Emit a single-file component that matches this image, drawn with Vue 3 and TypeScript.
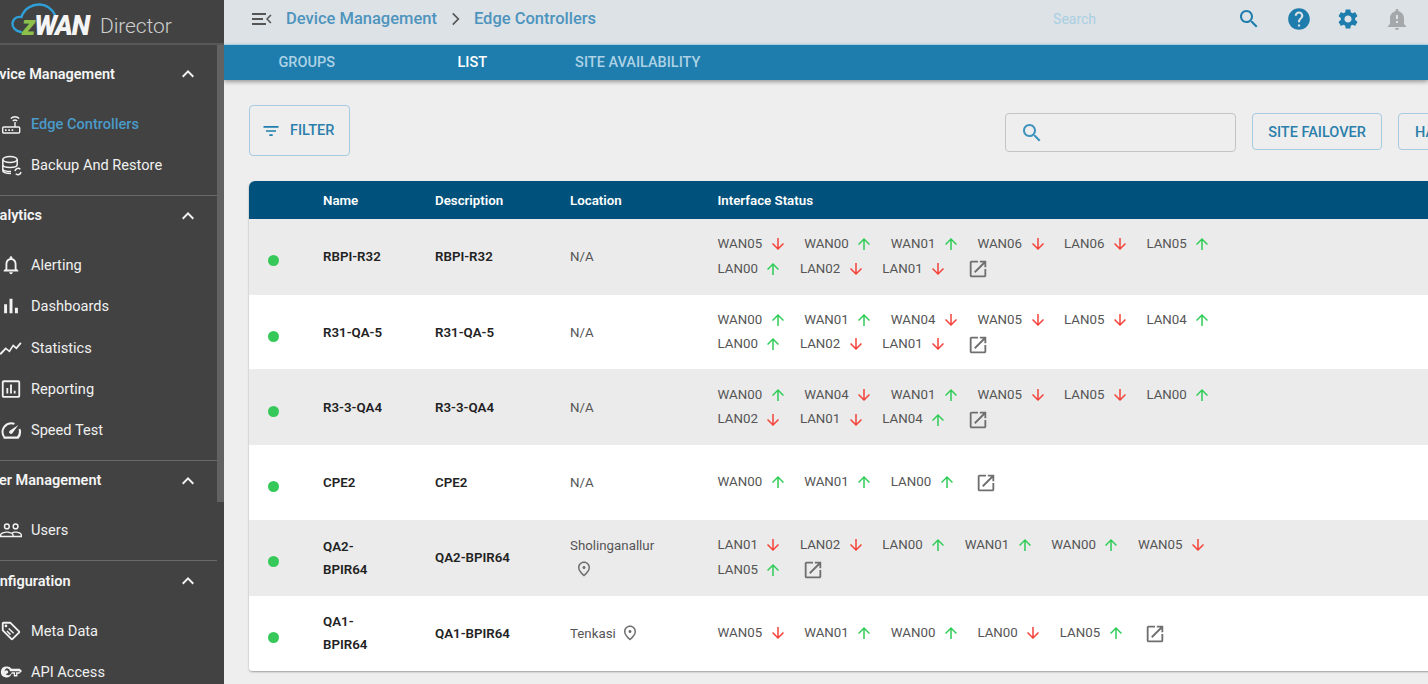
<script setup lang="ts">
const P: Record<string, string> = {
  chevron: 'M12 8l-6 6 1.41 1.41L12 10.83l4.59 4.58L18 14z',
  search: 'M15.5 14h-.79l-.28-.27C15.41 12.59 16 11.11 16 9.5 16 5.91 13.09 3 9.5 3S3 5.91 3 9.5 5.91 16 9.5 16c1.61 0 3.09-.59 4.23-1.57l.27.28v.79l5 4.99L20.49 19l-4.99-5zm-6 0C7.01 14 5 11.99 5 9.5S7.01 5 9.5 5 14 7.01 14 9.5 11.99 14 9.5 14z',
  help: 'M12 2C6.48 2 2 6.48 2 12s4.48 10 10 10 10-4.48 10-10S17.52 2 12 2zm1 17h-2v-2h2v2zm2.07-7.75l-.9.92C13.45 12.9 13 13.5 13 15h-2v-.5c0-1.1.45-2.1 1.17-2.83l1.24-1.26c.37-.36.59-.86.59-1.41 0-1.1-.9-2-2-2s-2 .9-2 2H8c0-2.21 1.79-4 4-4s4 1.79 4 4c0 .88-.36 1.68-.93 2.25z',
  gear: 'M19.14,12.94c0.04-0.3,0.06-0.61,0.06-0.94c0-0.32-0.02-0.64-0.07-0.94l2.03-1.58c0.18-0.14,0.23-0.41,0.12-0.61 l-1.92-3.32c-0.12-0.22-0.37-0.29-0.59-0.22l-2.39,0.96c-0.5-0.38-1.03-0.7-1.62-0.94L14.4,2.81c-0.04-0.24-0.24-0.41-0.48-0.41 h-3.84c-0.24,0-0.43,0.17-0.47,0.41L9.25,5.35C8.66,5.59,8.12,5.92,7.63,6.29L5.24,5.33c-0.22-0.08-0.47,0-0.59,0.22L2.74,8.87 C2.62,9.08,2.66,9.34,2.86,9.48l2.03,1.58C4.84,11.36,4.8,11.69,4.8,12s0.02,0.64,0.07,0.94l-2.03,1.58 c-0.18,0.14-0.23,0.41-0.12,0.61l1.92,3.32c0.12,0.22,0.37,0.29,0.59,0.22l2.39-0.96c0.5,0.38,1.03,0.7,1.62,0.94l0.36,2.54 c0.05,0.24,0.24,0.41,0.48,0.41h3.84c0.24,0,0.44-0.17,0.47-0.41l0.36-2.54c0.59-0.24,1.13-0.56,1.62-0.94l2.39,0.96 c0.22,0.08,0.47,0,0.59-0.22l1.92-3.32c0.12-0.22,0.07-0.47-0.12-0.61L19.14,12.94z M12,15.6c-1.98,0-3.6-1.62-3.6-3.6 s1.62-3.6,3.6-3.6s3.6,1.62,3.6,3.6S13.98,15.6,12,15.6z',
  bell: 'M12 23c1.1 0 1.99-.89 1.99-1.99h-3.98c0 1.1.89 1.99 1.99 1.99zm7-6v-6c0-3.35-2.36-6.15-5.5-6.83V3.5c0-.83-.67-1.5-1.5-1.5s-1.5.67-1.5 1.5v.67C7.36 4.85 5 7.65 5 11v6l-2 2v1h18v-1l-2-2zm-6-1h-2v-2h2v2zm0-4h-2V8h2v4z',
  open: 'M19 19H5V5h7V3H5c-1.11 0-2 .9-2 2v14c0 1.1.89 2 2 2h14c1.1 0 2-.9 2-2v-7h-2v7zM14 3v2h3.59l-9.83 9.83 1.41 1.41L19 6.41V10h2V3h-7z',
  up: 'M4 12l1.41 1.41L11 7.83V20h2V7.83l5.58 5.59L20 12l-8-8-8 8z',
  down: 'M20 12l-1.41-1.41L13 16.17V4h-2v12.17l-5.58-5.59L4 12l8 8 8-8z',
  filter: 'M10 18h4v-2h-4v2zM3 6v2h18V6H3zm3 7h12v-2H6v2z',
  pin: 'M12 12c-1.1 0-2-.9-2-2s.9-2 2-2 2 .9 2 2-.9 2-2 2zm6-1.8C18 6.57 15.35 4 12 4s-6 2.57-6 6.2c0 2.34 1.95 5.44 6 9.14 4.05-3.7 6-6.8 6-9.14zM12 2c4.2 0 8 3.22 8 8.2 0 3.32-2.67 7.25-8 11.8-5.33-4.55-8-8.48-8-11.8C4 5.22 7.8 2 12 2z',
  alert: 'M12 22c1.1 0 2-.9 2-2h-4c0 1.1.9 2 2 2zm6-6v-5c0-3.07-1.63-5.64-4.5-6.32V4c0-.83-.67-1.5-1.5-1.5s-1.5.67-1.5 1.5v.68C7.64 5.36 6 7.92 6 11v5l-2 2v1h16v-1l-2-2zm-2 1H8v-6c0-2.48 1.51-4.5 4-4.5s4 2.02 4 4.5v6z',
  bars: 'M4.5 10h3.2v10H4.5zM10.4 4h3.2v16h-3.2zm5.9 10h3.2v6h-3.2z',
  stats: 'M1 19.500l5.500-6 4 3.500 4-6.500 3.500 3L23.500 7 22 5.800l-4.300 5.200-3.500-3-4.200 6.500-3.800-3.300L-.5 18z',
  report: 'M20 2.5H4C3 2.5 2 3.5 2 4.5v15c0 1 1 2 2 2h16c1 0 2-1 2-2v-15c0-1-1-2-2-2zm0 17H4v-15h16v15zM7 11h2v6H7zm4-4h2v10h-2zm4 7h2v3h-2z',
  speed: 'M3.9 20.5A10.6 10.6 0 0 1 12 3.5c1.5 0 3 .3 4.3.9l-1.1 1.8A8.6 8.6 0 0 0 5.3 19h13.4a8.6 8.6 0 0 0 1.6-7.6l1.8-1a10.6 10.6 0 0 1-1.9 11.1H3.9zM10.6 15.6a2 2 0 0 1 0-2.9L20 6.5l-6.5 9.1a2 2 0 0 1-2.9 0z',
  users: 'M7.5 11.5a3.4 3.4 0 1 0 0-6.8 3.4 3.4 0 0 0 0 6.8zm0-1.6a1.8 1.8 0 1 1 0-3.6 1.8 1.8 0 0 1 0 3.6zM17 11.5a3.4 3.4 0 1 0 0-6.8 3.4 3.4 0 0 0 0 6.8zm0-1.6a1.8 1.8 0 1 1 0-3.6 1.8 1.8 0 0 1 0 3.6zM7.5 13.5c-2.8 0-7.5 1.2-7.5 3.7V20h24v-2.8c0-2.5-4.300-3.700-7-3.700-2 0-3.600.5-4.700 1.200-1.200-.7-2.900-1.200-4.800-1.200zM1.600 18.400v-1.200c0-.9 3.400-2.100 5.900-2.100s5.900 1.200 5.900 2.100v1.200H1.600zm13.400 0v-1.200c0-.7-.3-1.200-.9-1.700.8-.3 1.900-.5 2.900-.5 2.300 0 5.400 1.200 5.400 2.200v1.200H15z',
  tag: 'M21.400 11.600l-9-9C12 2.200 11.500 2 11 2H4C2.900 2 2 2.900 2 4v7c0 .6.200 1.100.6 1.400l9 9c.4.4.9.6 1.400.6s1.100-.2 1.400-.6l7-7c.4-.4.6-.9.6-1.400s-.2-1.100-.6-1.400zM13 20l-9-9V4h7l9 9-7 7zM6.500 5A1.500 1.500 0 1 0 6.500 8 1.500 1.500 0 0 0 6.500 5zM10 8.600l5.400 5.400-1.100 1.100-5.400-5.400zM8.100 11.500l3.900 3.900-1.100 1.100-3.900-3.900z',
  key: 'M7 6a6 6 0 1 0 5.600 8H15v3h4v-3h2l3-3-2.500-2.500H12.600A6 6 0 0 0 7 6zm0 2a4 4 0 0 1 3.900 3.100H21l.7.9-.7.400h-3.500v3h-1v-3h-3.600A4 4 0 1 1 7 8zm0 2a2 2 0 1 0 0 4 2 2 0 0 0 0-4z',
}

interface NavItem { label: string; icon: string; active?: boolean; custom?: string }
const sections: { title: string; items: NavItem[] }[] = [
  { title: 'Device Management', items: [
    { label: 'Edge Controllers', icon: '', custom: 'router', active: true },
    { label: 'Backup And Restore', icon: '', custom: 'db' },
  ] },
  { title: 'Analytics', items: [
    { label: 'Alerting', icon: P.alert },
    { label: 'Dashboards', icon: P.bars },
    { label: 'Statistics', icon: P.stats },
    { label: 'Reporting', icon: P.report },
    { label: 'Speed Test', icon: P.speed },
  ] },
  { title: 'User Management', items: [{ label: 'Users', icon: P.users }] },
  { title: 'Configuration', items: [
    { label: 'Meta Data', icon: P.tag },
    { label: 'API Access', icon: P.key },
  ] },
]

const tabs = ['GROUPS', 'LIST', 'SITE AVAILABILITY']

interface Row { name: string; loc: string; pin?: boolean; ifs: string }
const rows: Row[] = [
  { name: 'RBPI-R32', loc: 'N/A', ifs: 'WAN05- WAN00+ WAN01+ WAN06- LAN06- LAN05+ LAN00+ LAN02- LAN01-' },
  { name: 'R31-QA-5', loc: 'N/A', ifs: 'WAN00+ WAN01+ WAN04- WAN05- LAN05- LAN04+ LAN00+ LAN02- LAN01-' },
  { name: 'R3-3-QA4', loc: 'N/A', ifs: 'WAN00+ WAN04- WAN01+ WAN05- LAN05- LAN00+ LAN02- LAN01- LAN04+' },
  { name: 'CPE2', loc: 'N/A', ifs: 'WAN00+ WAN01+ LAN00+' },
  { name: 'QA2-BPIR64', loc: 'Sholinganallur', pin: true, ifs: 'LAN01- LAN02- LAN00+ WAN01+ WAN00+ WAN05- LAN05+' },
  { name: 'QA1-BPIR64', loc: 'Tenkasi', pin: true, ifs: 'WAN05- WAN01+ WAN00+ LAN00- LAN05+' },
]
const parse = (s: string) => s.split(' ').map((t) => ({ name: t.slice(0, -1), up: t.endsWith('+') }))
</script>

<template>
  <div class="app">
    <aside class="side">
      <div class="logo">
        <svg class="cloud" width="80" height="36" viewBox="0 0 80 36" fill="none" stroke="#2f9fd8" stroke-width="2.400" stroke-linecap="round">
          <path d="M21 32C15 31 12 27 12.500 23C13.500 18.500 17 16.500 21.500 17C24 9 32 4 40 4.500C47 5 52 9 55 15" />
        </svg>
        <span class="logo-word"><span class="z">z</span>WAN</span>
        <span class="logo-dir">Director</span>
      </div>
      <div class="side-body">
        <nav class="nav">
          <section v-for="s in sections" :key="s.title" class="sec">
            <div class="sec-head">
              <span>{{ s.title }}</span>
              <svg class="chev" width="24" height="24" viewBox="0 0 24 24"><path :d="P.chevron" fill="#f2f2f2" /></svg>
            </div>
            <ul class="items">
              <li v-for="it in s.items" :key="it.label" class="item" :class="{ active: it.active }">
                <span class="ico">
                  <svg v-if="it.custom === 'router'" class="ci" width="22" height="22" viewBox="0 0 22 22" fill="none" stroke="#f2f2f2" stroke-width="1.400">
                    <rect x="2.700" y="14" width="17" height="6" rx="1" />
                    <path d="M15 14V9M10.800 5.500a6 6 0 0 1 8.400 0M12.800 8a3.200 3.200 0 0 1 4.400 0" />
                    <path d="M5 17.200h1.600M8.300 17.200h1.600M11.600 17.200h1.600" stroke-width="1.800" />
                  </svg>
                  <svg v-else-if="it.custom === 'db'" class="ci" width="22" height="22" viewBox="0 0 22 22" fill="none" stroke="#f2f2f2" stroke-width="1.500">
                    <ellipse cx="10" cy="5.500" rx="7.200" ry="3" />
                    <path d="M2.800 5.500V16.500C2.800 18.300 6 19.500 11 19.500M17.200 5.500V11M2.800 10.500C2.800 12.300 6 13.500 10 13.500S17.200 12.300 17.200 10.500M2.800 15C2.800 16.600 6 17.500 11 17.500" />
                    <path d="M15 17a3.200 3.200 0 0 1 5.300-1.800M21 18a3.200 3.200 0 0 1-5.300 1.800" />
                  </svg>
                  <svg v-else width="22" height="22" viewBox="0 0 24 24"><path :d="it.icon" fill="#f2f2f2" fill-rule="evenodd" /></svg>
                </span>
                <span>{{ it.label }}</span>
              </li>
            </ul>
          </section>
        </nav>
        <div class="track"><div class="thumb"></div></div>
      </div>
    </aside>

    <main class="main">
      <header class="top">
        <svg class="menu" width="22" height="16" viewBox="0 0 22 16" fill="#555"><path d="M1 2h14v2H1zM1 7h11v2H1zM1 12h14v2H1zM20.500 4.500L17 8l3.500 3.500-1.200 1L15 8l4.300-4.500z" /></svg>
        <span class="crumb">Device Management</span>
        <svg class="crumb-sep" width="20" height="20" viewBox="0 0 24 24"><path d="M8.600 6L10 4.600 17.400 12 10 19.400 8.600 18l6-6z" fill="#555" /></svg>
        <span class="crumb">Edge Controllers</span>
        <span class="ph">Search</span>
        <div class="top-icons">
          <svg width="24" height="24" viewBox="0 0 24 24"><path :d="P.search" fill="#1e7dad" /></svg>
          <svg width="26" height="26" viewBox="0 0 24 24"><path :d="P.help" fill="#1e7dad" /></svg>
          <svg width="24" height="24" viewBox="0 0 24 24"><path :d="P.gear" fill="#1e7dad" /></svg>
          <svg width="24" height="24" viewBox="0 0 24 24"><path :d="P.bell" fill="#a5a8aa" /></svg>
        </div>
      </header>
      <div class="tabs">
        <div v-for="t in tabs" :key="t" class="tab" :class="{ on: t === 'LIST' }">{{ t }}</div>
      </div>

      <div class="content">
        <div class="toolbar">
          <button class="btn filter">
            <svg width="20" height="20" viewBox="0 0 24 24"><path :d="P.filter" fill="#1e7dad" /></svg>
            FILTER
          </button>
          <div class="box">
            <svg width="24" height="24" viewBox="0 0 24 24"><path :d="P.search" fill="#3f93bf" /></svg>
          </div>
          <button class="btn act">SITE FAILOVER</button>
          <button class="btn act ha">HA FAILOVER</button>
        </div>

        <div class="table">
          <div class="row head">
            <div></div>
            <div>Name</div>
            <div>Description</div>
            <div>Location</div>
            <div>Interface Status</div>
          </div>
          <div v-for="r in rows" :key="r.name" class="row body">
            <div><span class="dot"></span></div>
            <div class="name">{{ r.name }}</div>
            <div class="desc">{{ r.name }}</div>
            <div class="loc" :class="{ long: r.loc.length > 10 }">
              <span>{{ r.loc }}</span>
              <svg v-if="r.pin" class="pin" width="18" height="18" viewBox="0 0 24 24"><path :d="P.pin" fill="#707070" /></svg>
            </div>
            <div class="ifs">
              <span v-for="f in parse(r.ifs)" :key="f.name + f.up" class="if">
                <span class="if-name">{{ f.name }}</span>
                <svg width="18" height="18" viewBox="0 0 24 24"><path :d="f.up ? P.up : P.down" :fill="f.up ? '#2ecc55' : '#f4433a'" /></svg>
              </span>
              <svg class="ext" width="22" height="22" viewBox="0 0 24 24"><path :d="P.open" fill="#6f6f6f" /></svg>
            </div>
          </div>
        </div>
      </div>
    </main>
  </div>
</template>

<style>
html, body { margin: 0; overflow: hidden; }
</style>

<style scoped>
.app {
  display: flex;
  width: 1428px;
  height: 684px;
  overflow: hidden;
  font-family: Roboto, "Liberation Sans", sans-serif;
  background: #eeeeee;
}
.side {
  flex: 0 0 224px;
  width: 224px;
  background: #424242;
  display: flex;
  flex-direction: column;
  overflow: hidden;
}
.logo {
  position: relative;
  flex: 0 0 45px;
  height: 45px;
  box-sizing: border-box;
  border-bottom: 2px solid #585858;
  display: flex;
  align-items: center;
  padding: 8px 0 0 22px;
}
.cloud { position: absolute; left: 0; top: 0; }
.logo-word {
  position: relative;
  font: italic 900 27px Roboto, sans-serif;
  color: #f4f4f4;
  letter-spacing: -1.300px;
  width: 78px;
}
.z { color: #8cc04a; }
.logo-dir {
  font-weight: 300;
  font-size: 21px;
  color: #cfcfcf;
  letter-spacing: -.1px;
}
.side-body { flex: 1; display: flex; min-height: 0; }
.nav { flex: 0 0 217px; width: 217px; overflow: hidden; }
.track { flex: 0 0 7px; }
.thumb { height: 457px; background: #626262; }
.sec { border-bottom: 1px solid #6a6a6a; padding-bottom: 9px; }
.sec:first-child { padding-top: 9px; }
.sec-head {
  height: 40px;
  display: flex;
  align-items: center;
  justify-content: space-between;
  margin-left: -18px;
  padding-right: 17px;
  font-size: 14.500px;
  font-weight: 600;
  color: #f5f5f5;
}
.items { list-style: none; margin: 0; padding: 9px 0 0; }
.item {
  height: 41.250px;
  display: flex;
  align-items: center;
  font-size: 14.600px;
  color: #f0f0f0;
}
.item.active { color: #4a9ac9; font-weight: 500; }
.ico { flex: 0 0 31px; display: flex; justify-content: flex-start; }
.main { flex: 1; min-width: 0; display: flex; flex-direction: column; overflow: hidden; }
.top {
  flex: 0 0 44px;
  height: 44px;
  box-sizing: border-box;
  background: #dde2e7;
  display: flex;
  align-items: center;
  padding-left: 27px;
  padding-bottom: 7px;
}
.menu { margin-right: 13px; flex: none; }
.crumb { font-size: 16.500px; font-weight: 500; color: #4d94bd; flex: none; }
.crumb-sep { margin: 0 8.500px; flex: none; }
.ph { margin-left: 457px; font-size: 14px; color: #a9cfe1; width: 43px; flex: none; }
.top-icons { display: flex; align-items: center; margin-left: 141px; gap: 24.500px; flex: none; }
.tabs {
  flex: 0 0 36px;
  height: 36px;
  box-sizing: border-box;
  border-top: 1px solid #a9cfe3;
  background: #1e7dad;
  display: flex;
  box-shadow: 0 2px 4px rgba(0,0,0,.35);
  position: relative;
}
.tab {
  width: 165.500px;
  text-align: center;
  line-height: 35px;
  font-size: 14.500px;
  font-weight: 500;
  color: #add2e5;
}
.tab.on { color: #ffffff; }
.content { padding: 25px 0 0 25px; }
.toolbar { display: flex; align-items: flex-start; width: max-content; }
.btn {
  box-sizing: border-box;
  background: transparent;
  border: 1px solid #a6cadf;
  border-radius: 4px;
  font-family: inherit;
  font-size: 14.500px;
  font-weight: 500;
  color: #2a7fab;
  padding: 0;
  flex: none;
}
.filter {
  width: 101px;
  height: 51px;
  display: flex;
  align-items: center;
  padding-left: 11px;
  gap: 9px;
}
.box {
  box-sizing: border-box;
  flex: none;
  width: 231px;
  height: 39px;
  margin: 8px 0 0 655px;
  border: 1px solid #c4c4c4;
  border-radius: 4px;
  display: flex;
  align-items: center;
  padding-left: 14px;
}
.act { height: 37px; margin: 8px 0 0 16px; width: 130px; padding-top: 2px; }
.ha { text-align: left; padding-left: 16px; }
.table {
  margin-top: 25px;
  width: 1300px;
  background: #fff;
  border-radius: 6px 0 0 4px;
  overflow: hidden;
  box-shadow: 0 1px 2px rgba(0,0,0,.35);
}
.row {
  display: grid;
  grid-template-columns: 74px 112px 135px 147.500px 1fr;
  align-items: center;
}
.head {
  height: 38px;
  background: #00527d;
  color: #fff;
  font-size: 13.300px;
  font-weight: 600;
}
.body {
  height: 75.200px;
  box-sizing: border-box;
  font-size: 13.300px;
  color: #555;
  background: #fff;
  border-bottom: 1px solid #ececec;
}
.head + .body { height: 76px; }
.body:nth-child(even) { background: #ebebeb; }
.body:last-child { border-bottom: 0; }
.dot {
  display: block;
  width: 11px;
  height: 11px;
  margin: 8px 0 0 19px;
  border-radius: 50%;
  background: #36c95a;
}
.name, .desc { font-weight: 600; color: #222; line-height: 23px; }
.name { padding-right: 40px; }
.loc { display: flex; flex-wrap: wrap; align-items: center; width: 100px; line-height: 23px; row-gap: 3px; }
.pin { margin: 0 0 0 5px; }
.loc.long .pin { margin-bottom: 4px; }
.ifs { display: flex; flex-wrap: wrap; align-items: center; width: 560px; line-height: 24.500px; }
.if { display: inline-flex; align-items: center; margin-right: 17.500px; }
.if-name { margin-right: 6.500px; }
.ext { margin: 1px 0 0 2px; }
</style>
